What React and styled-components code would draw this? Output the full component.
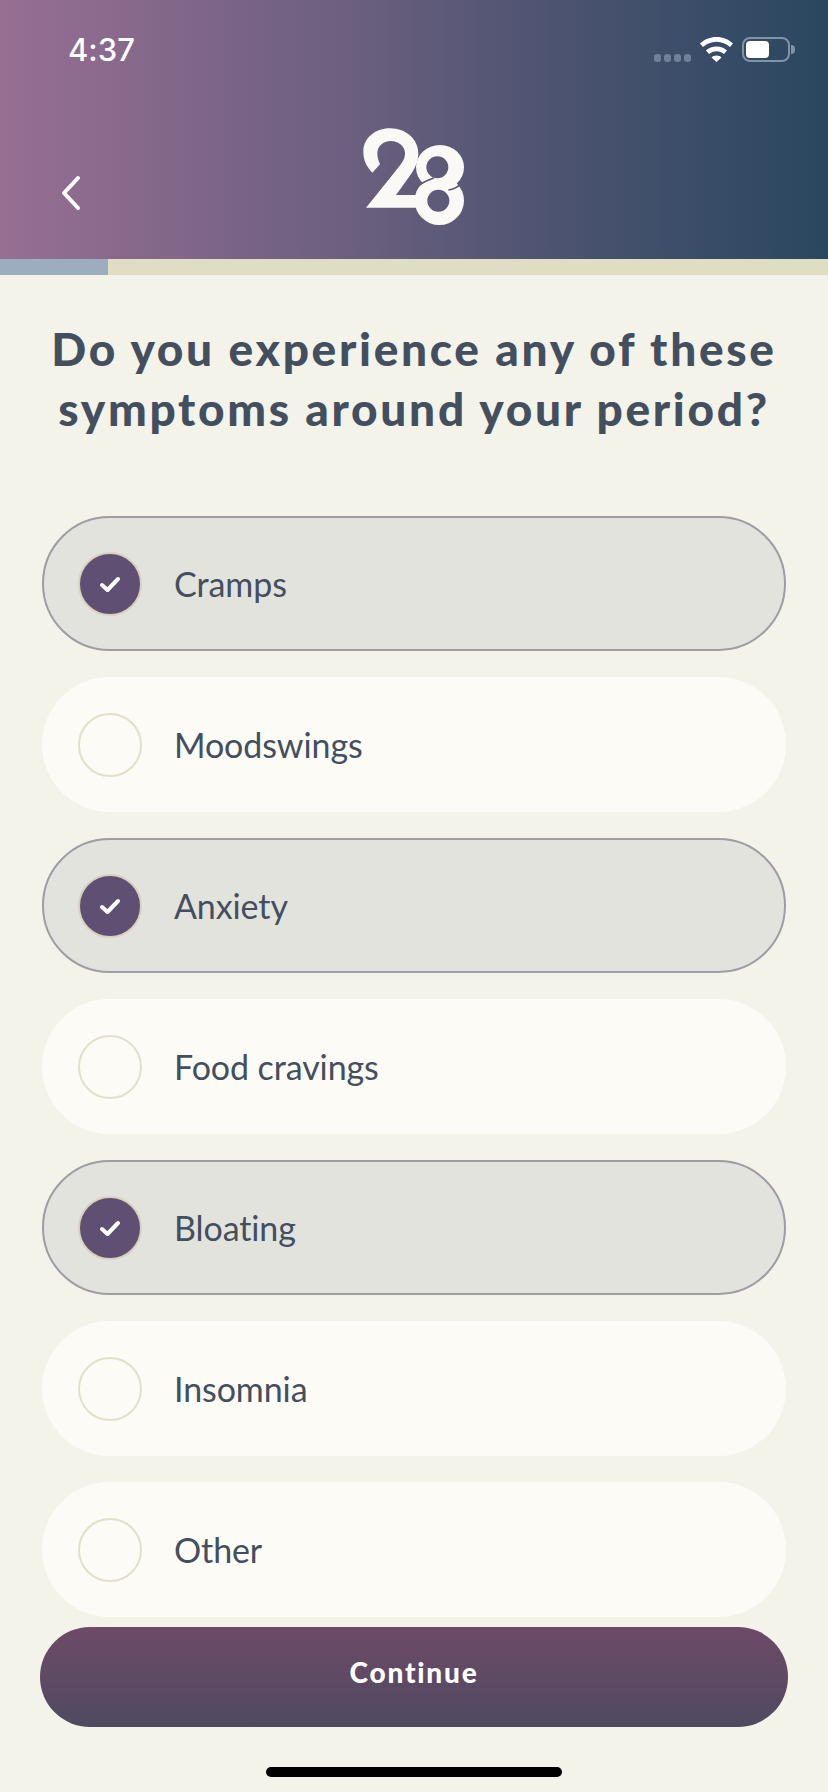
import React from "react";
import styled, { createGlobalStyle } from "styled-components";

const GlobalStyle = createGlobalStyle`
    html, body {
        margin: 0;
        padding: 0;
        background: #f3f3e9;
    }
    * {
        box-sizing: border-box;
    }
`;

const Page = styled.div`
    width: 828px;
    height: 1792px;
    overflow: hidden;
    display: flex;
    flex-direction: column;
    background: #f3f3e9;
    font-family: "Lato", sans-serif;
    font-variant-ligatures: none;
`;

const Header = styled.header`
    height: 259px;
    background: linear-gradient(90deg, #976f93 0%, #6c5f7f 42%, #4b5370 68%, #2a4760 100%);
`;

const StatusBar = styled.div`
    height: 110px;
    padding: 31px 38px 0 68px;
    display: flex;
    justify-content: space-between;
    align-items: flex-start;
`;

const Time = styled.div`
    font-family: "Inter", sans-serif;
    font-size: 31px;
    font-weight: 500;
    line-height: 38px;
    color: #ffffff;
`;

const StatusIcons = styled.div`
    display: flex;
    align-items: center;
    padding-top: 6px;
`;

const SignalDots = styled.div`
    display: flex;
    gap: 3px;
    margin-right: 9px;
    padding-top: 16px;
`;

const Dot = styled.span`
    width: 7px;
    height: 8px;
    border-radius: 3px;
    background: #6f8098;
`;

const Battery = styled.div`
    position: relative;
    width: 48px;
    height: 25px;
    margin-left: 9px;
    padding: 2px;
    border: 2px solid #8093a7;
    border-radius: 8px;

    &::after {
        content: "";
        position: absolute;
        top: 6px;
        right: -7px;
        width: 4px;
        height: 9px;
        border-radius: 0 4px 4px 0;
        background: #8093a7;
    }
`;

const BatteryLevel = styled.div`
    width: 23px;
    height: 100%;
    border-radius: 4px;
    background: #ffffff;
`;

const NavRow = styled.div`
    height: 125px;
    display: grid;
    grid-template-columns: 340px 150px 1fr;
`;

const BackButton = styled.button`
    width: 40px;
    height: 40px;
    margin: 64px 0 0 51px;
    padding: 0;
    border: none;
    background: none;
`;

const ProgressTrack = styled.div`
    height: 16px;
    background: #e0ddc5;
`;

const ProgressFill = styled.div`
    width: 108px;
    height: 100%;
    background: #9cadc0;
`;

const Title = styled.h1`
    margin: 44px 0 0;
    font-family: "Lato", sans-serif;
    font-size: 46px;
    font-weight: 900;
    line-height: 60px;
    letter-spacing: 2.7px;
    text-align: center;
    color: #434f5f;
`;

const OptionList = styled.div`
    margin-top: 77px;
    padding: 0 42px;
    display: flex;
    flex-direction: column;
    gap: 26px;
`;

const Option = styled.div`
    height: 135px;
    padding-left: 36px;
    display: flex;
    align-items: center;
    gap: 32px;
    border-radius: 68px;
    background: ${({ $selected }) => ($selected ? "#e3e3de" : "#fcfbf6")};
    border: ${({ $selected }) => ($selected ? "2px solid #9d9da3" : "none")};
    ${({ $selected }) => $selected && "padding-left: 34px;"}
`;

const Radio = styled.div`
    width: 64px;
    height: 64px;
    display: flex;
    align-items: center;
    justify-content: center;
    border-radius: 50%;
    border: 2px solid ${({ $selected }) => ($selected ? "#d8d2bd" : "#e3e0c9")};
    background: ${({ $selected }) => ($selected ? "#5f4f72" : "transparent")};
`;

const OptionLabel = styled.span`
    font-size: 34px;
    letter-spacing: -0.1px;
    color: #434f5f;
`;

const ContinueButton = styled.button`
    width: 748px;
    height: 100px;
    margin: 10px 0 0 40px;
    padding: 0 0 10px;
    border: none;
    border-radius: 50px;
    background: linear-gradient(180deg, #6e4a68 0%, #4f4a60 100%);
    font-family: "Lato", sans-serif;
    font-size: 28px;
    font-weight: 900;
    letter-spacing: 1.8px;
    color: #ffffff;
`;

const HomeBar = styled.div`
    width: 296px;
    height: 10px;
    margin: 40px auto 0;
    border-radius: 5px;
    background: #000000;
`;

const OPTIONS = [
    { label: "Cramps", selected: true },
    { label: "Moodswings", selected: false },
    { label: "Anxiety", selected: true },
    { label: "Food cravings", selected: false },
    { label: "Bloating", selected: true },
    { label: "Insomnia", selected: false },
    { label: "Other", selected: false },
];

const WifiIcon = () => (
    <svg width="33" height="25" viewBox="0 0 33 25" fill="#ffffff">
        <path d="M16.5 0C10 0 4.6 2.4 0 6.4l3 3.6C6.800 6.800 11.300 4.700 16.500 4.700S26.200 6.800 30 10l3-3.600C28.400 2.400 23 0 16.500 0z" />
        <path d="M16.500 9.500c-4.200 0-7.600 1.500-10.500 4l3 3.600c2-1.700 4.500-2.800 7.500-2.800s5.500 1.100 7.500 2.800l3-3.600c-2.900-2.500-6.300-4-10.500-4z" />
        <path d="M16.500 18.500c-2 0-3.500.7-5 1.900l5 4.600 5-4.600c-1.500-1.200-3-1.900-5-1.900z" />
    </svg>
);

const Logo = () => (
    <svg width="150" height="125" viewBox="0 0 450 375">
        <defs>
            <mask id="eight-cuts" maskUnits="userSpaceOnUse" x="0" y="0" width="450" height="375">
                <rect width="450" height="375" fill="#fff" />
                <circle cx="292" cy="172" r="33" fill="#000" />
                <circle cx="295" cy="272" r="33" fill="#000" />
                <path d="M232 232C245 215 265 212 282 203" fill="none" stroke="#000" strokeWidth="5" />
                <path d="M325 240C340 238 352 232 366 220" fill="none" stroke="#000" strokeWidth="5" />
            </mask>
        </defs>
        <path
            fill="#faf9f5"
            d="M97 188C80 170 70 150 70 125C70 85 105 55 150 55C200 55 235 90 235 130C235 150 228 170 215 190L168 255H230V293H78L165 185C185 160 195 150 195 130C195 108 175 93 152 93C130 93 112 108 112 130C112 143 115 152 120 163Z"
        />
        <g fill="#faf9f5" mask="url(#eight-cuts)">
            <ellipse cx="300" cy="172" rx="72" ry="67" />
            <ellipse cx="298" cy="272" rx="74" ry="73" />
        </g>
    </svg>
);

const App = () => {
    return (
        <Page>
            <GlobalStyle />
            <Header>
                <StatusBar>
                    <Time>4:37</Time>
                    <StatusIcons>
                        <SignalDots>
                            <Dot />
                            <Dot />
                            <Dot />
                            <Dot />
                        </SignalDots>
                        <WifiIcon />
                        <Battery>
                            <BatteryLevel />
                        </Battery>
                    </StatusIcons>
                </StatusBar>
                <NavRow>
                    <BackButton aria-label="Back">
                        <svg width="20" height="36" viewBox="0 0 20 36" fill="none">
                            <path
                                d="M17 3L3 18L17 33"
                                stroke="#ffffff"
                                strokeWidth="4"
                                strokeLinecap="round"
                                strokeLinejoin="round"
                            />
                        </svg>
                    </BackButton>
                    <Logo />
                </NavRow>
            </Header>
            <ProgressTrack>
                <ProgressFill />
            </ProgressTrack>
            <Title>
                Do you experience any of these
                <br />
                symptoms around your period?
            </Title>
            <OptionList>
                {OPTIONS.map(({ label, selected }) => (
                    <Option key={label} $selected={selected}>
                        <Radio $selected={selected}>
                            {selected && (
                                <svg width="24" height="20" viewBox="0 0 24 20" fill="none">
                                    <path
                                        d="M4 11L9.500 16L20 5"
                                        stroke="#ffffff"
                                        strokeWidth="4"
                                        strokeLinecap="round"
                                        strokeLinejoin="round"
                                    />
                                </svg>
                            )}
                        </Radio>
                        <OptionLabel>{label}</OptionLabel>
                    </Option>
                ))}
            </OptionList>
            <ContinueButton>Continue</ContinueButton>
            <HomeBar />
        </Page>
    );
};

export default App;
